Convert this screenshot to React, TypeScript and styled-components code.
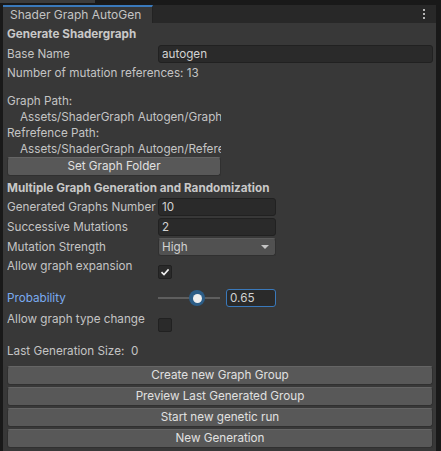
import React from "react";
import styled, { createGlobalStyle } from "styled-components";

const GlobalStyle = createGlobalStyle`
  html, body {
    margin: 0;
    padding: 0;
    background: #191919;
    overflow: hidden;
  }
  * { box-sizing: border-box; }
`;

const Window = styled.div`
  width: 441px;
  height: 451px;
  display: flex;
  flex-direction: column;
  background: #191919;
  font-family: Inter, "Liberation Sans", sans-serif;
  font-size: 11.7px;
  color: #c4c4c4;
`;

const TopStrip = styled.div`
  height: 5px;
  display: flex;
  gap: 12px;
`;

const GhostTab = styled.div<{ w: number }>`
  width: ${({ w }) => w}px;
  height: 3px;
  background: #3c3c3c;
`;

const Panel = styled.div`
  flex: 1;
  display: flex;
  flex-direction: column;
  margin: 0 5px 0 3px;
  min-height: 0;
`;

const TabBar = styled.div`
  height: 18px;
  display: flex;
  align-items: stretch;
  background: #282828;
`;

const Tab = styled.div`
  width: 150px;
  background: #383838;
  border-top: 2px solid #3a79bb;
  border-right: 1px solid #232323;
  padding-left: 7px;
  line-height: 15px;
  font-size: 12px;
  color: #c4c4c4;
  white-space: nowrap;
`;

const TabMenu = styled.div`
  margin-left: auto;
  margin-right: 11px;
  padding-top: 4px;
  display: flex;
  flex-direction: column;
  gap: 2px;
`;

const MenuDot = styled.span`
  width: 2px;
  height: 2px;
  background: #b4b4b4;
`;

const Content = styled.div`
  flex: 1;
  background: #383838;
  padding: 0 3px 0 4px;
  display: flex;
  flex-direction: column;
  overflow: hidden;
`;

const Heading = styled.div<{ top: number }>`
  margin-top: ${({ top }) => top}px;
  height: 18px;
  line-height: 18px;
  font-weight: 700;
  color: #c8c8c8;
  white-space: nowrap;
`;

const Row = styled.div<{ top: number }>`
  margin-top: ${({ top }) => top}px;
  height: 18px;
  display: flex;
  align-items: center;
`;

const Label = styled.div<{ focused?: boolean }>`
  width: 151px;
  flex: none;
  white-space: nowrap;
  overflow: hidden;
  color: ${({ focused }) => (focused ? "#7babf0" : "#c4c4c4")};
`;

const TextLine = styled.div<{ top: number; indent?: boolean }>`
  margin-top: ${({ top }) => top}px;
  height: 16px;
  line-height: 16px;
  padding-left: ${({ indent }) => (indent ? 13 : 0)}px;
  width: ${({ indent }) => (indent ? 214 : 420)}px;
  white-space: nowrap;
  overflow: hidden;
`;

const Info = styled.div<{ top: number }>`
  margin-top: ${({ top }) => top}px;
  height: 18px;
  line-height: 18px;
  white-space: nowrap;
`;

const Field = styled.div<{ w?: number; focused?: boolean }>`
  ${({ w }) => (w ? `width: ${w}px;` : "flex: 1;")}
  height: 18px;
  background: #2a2a2a;
  border: 1px solid ${({ focused }) => (focused ? "#3a79bb" : "#212121")};
  border-radius: 3px;
  padding-left: 3px;
  line-height: 16px;
  color: #d2d2d2;
  white-space: nowrap;
  overflow: hidden;
`;

const Dropdown = styled.div`
  width: 118px;
  height: 18px;
  background: #515151;
  border: 1px solid #303030;
  border-top-color: #5c5c5c;
  border-radius: 3px;
  padding: 0 6px 0 3px;
  display: flex;
  align-items: center;
  justify-content: space-between;
  color: #d2d2d2;
`;

const Arrow = styled.span`
  width: 0;
  height: 0;
  border-left: 4px solid transparent;
  border-right: 4px solid transparent;
  border-top: 4px solid #c4c4c4;
`;

const ToggleRow = styled.div<{ top: number }>`
  margin-top: ${({ top }) => top}px;
  height: 22px;
  display: flex;
  align-items: flex-start;
  line-height: 18px;
`;

const Check = styled.div`
  margin-top: 8px;
  width: 14px;
  height: 14px;
  background: #2a2a2a;
  border: 1px solid #212121;
  border-radius: 2px;
  display: flex;
  align-items: center;
  justify-content: center;
`;

const Slider = styled.div`
  width: 62px;
  height: 18px;
  margin-right: 6px;
  position: relative;
  display: flex;
  align-items: center;
`;

const Track = styled.div`
  width: 100%;
  height: 2px;
  background: #5e5e5e;
`;

const Thumb = styled.div`
  position: absolute;
  top: 50%;
  width: 16px;
  height: 16px;
  margin: -8px 0 0 -8px;
  border-radius: 50%;
  background: #2c5d87;
  display: flex;
  align-items: center;
  justify-content: center;
  &::after {
    content: "";
    width: 9px;
    height: 9px;
    border-radius: 50%;
    background: #eeeeee;
  }
`;

const Button = styled.div<{ top: number; w?: number }>`
  margin-top: ${({ top }) => top}px;
  ${({ w }) => (w ? `width: ${w}px;` : "margin-right: 0;")}
  height: 19px;
  background: #585858;
  border: 1px solid #303030;
  border-top-color: #656565;
  border-radius: 3px;
  text-align: center;
  line-height: 17px;
  color: #e0e0e0;
  white-space: nowrap;
`;

const CheckMark = () => (
  <svg width="10" height="10" viewBox="0 0 10 10">
    <polyline points="1.5,5.2 4,7.6 8.6,2.4" fill="none" stroke="#f0f0f0" strokeWidth="1.6" />
  </svg>
);

export default function App() {
  const probability = 0.63;
  return (
    <Window>
      <GlobalStyle />
      <TopStrip>
        <GhostTab w={95} />
        <GhostTab w={0} />
      </TopStrip>
      <Panel>
        <TabBar>
          <Tab>Shader Graph AutoGen</Tab>
          <TabMenu>
            <MenuDot />
            <MenuDot />
            <MenuDot />
          </TabMenu>
        </TabBar>
        <Content>
          <Heading top={2}>Generate Shadergraph</Heading>
          <Row top={2}>
            <Label>Base Name</Label>
            <Field>autogen</Field>
          </Row>
          <Info top={1}>Number of mutation references: 13</Info>
          <TextLine top={11}>Graph Path:</TextLine>
          <TextLine top={0} indent>Assets/ShaderGraph Autogen/Graph</TextLine>
          <TextLine top={0}>Refrefence Path:</TextLine>
          <TextLine top={0} indent>Assets/ShaderGraph Autogen/Reference</TextLine>
          <Button top={0} w={214}>Set Graph Folder</Button>
          <Heading top={3}>Multiple Graph Generation and Randomization</Heading>
          <Row top={1}>
            <Label>Generated Graphs Number</Label>
            <Field w={118}>10</Field>
          </Row>
          <Row top={2}>
            <Label>Successive Mutations</Label>
            <Field w={118}>2</Field>
          </Row>
          <Row top={2}>
            <Label>Mutation Strength</Label>
            <Dropdown>
              High
              <Arrow />
            </Dropdown>
          </Row>
          <ToggleRow top={1}>
            <Label>Allow graph expansion</Label>
            <Check>
              <CheckMark />
            </Check>
          </ToggleRow>
          <Row top={10}>
            <Label focused>Probability</Label>
            <Slider>
              <Track />
              <Thumb style={{ left: `${probability * 62}px` }} />
            </Slider>
            <Field w={50} focused>
              0.65
            </Field>
          </Row>
          <ToggleRow top={3}>
            <Label>Allow graph type change</Label>
            <Check />
          </ToggleRow>
          <Info top={10}>Last Generation Size:&nbsp; 0</Info>
          <Button top={6}>Create new Graph Group</Button>
          <Button top={2}>Preview Last Generated Group</Button>
          <Button top={2}>Start new genetic run</Button>
          <Button top={2}>New Generation</Button>
        </Content>
      </Panel>
    </Window>
  );
}
